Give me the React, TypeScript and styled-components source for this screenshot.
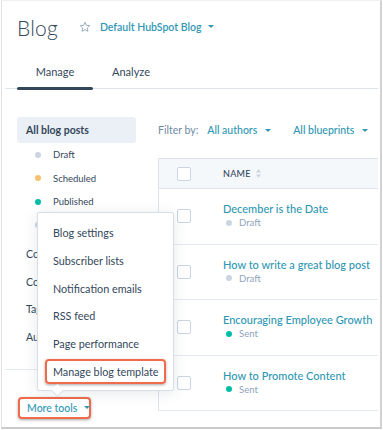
import React from "react";
import styled, { createGlobalStyle } from "styled-components";

const Global = createGlobalStyle`
  html, body { margin: 0; padding: 0; background: #fff; }
  body { font-family: Lato, "Open Sans", "Liberation Sans", sans-serif; color: #33475b; }
  * { box-sizing: border-box; }
`;

const TEAL = "#2f97b3";
const DARK = "#33475b";
const ORANGE = "#ef6b4b";

const Frame = styled.div`
  position: relative;
  margin-left: 1px;
  width: 381px;
  height: 429px;
  border-top: 1px solid #f0f0f0;
  border-left: 1px solid #e2e2e2;
  border-right: 2px solid #d2d2d2;
  border-bottom: 2px solid #cacaca;
  overflow: hidden;
  background: #fff;
`;

const TitleRow = styled.div`
  height: 54px;
  display: flex;
  align-items: center;
  padding-left: 15px;
  padding-bottom: 2px;
`;

const Title = styled.h1`
  margin: 0;
  font-size: 21px;
  font-weight: 300;
  color: ${DARK};
  letter-spacing: 0.2px;
`;

const StarWrap = styled.span`
  display: inline-flex;
  margin-left: 21px;
  margin-right: 9px;
`;

const BlogSelect = styled.span`
  display: inline-flex;
  align-items: center;
  gap: 7px;
  font-size: 10.5px;
  font-weight: 600;
  color: ${TEAL};
  margin-top: -1px;
  white-space: nowrap;
`;

const Caret = styled.span<{ $color?: string }>`
  display: inline-block;
  flex: none;
  width: 0;
  height: 0;
  border-left: 3px solid transparent;
  border-right: 3px solid transparent;
  border-top: 3.5px solid ${(p) => p.$color || TEAL};
`;

const Tabs = styled.div`
  display: flex;
  height: 34px;
  margin: 0 2px 0 3px;
  padding-left: 12px;
  border-bottom: 1px solid #dfe3eb;
`;

const Tab = styled.div<{ $active?: boolean }>`
  position: relative;
  width: 76px;
  display: flex;
  align-items: center;
  justify-content: center;
  font-size: 11px;
  color: ${DARK};
  font-weight: 400;
  padding-bottom: 1px;
  &::after {
    content: "";
    display: ${(p) => (p.$active ? "block" : "none")};
    position: absolute;
    left: 0;
    right: 0;
    bottom: -2px;
    height: 3px;
    border-radius: 2px;
    background: ${DARK};
  }
`;

const Body = styled.div`
  display: flex;
`;

const Sidebar = styled.div`
  width: 156px;
  flex: none;
  padding: 28px 0 0 15px;
`;

const AllPosts = styled.div`
  width: 119px;
  height: 26px;
  border-radius: 3px;
  background: #eaf0f6;
  display: flex;
  align-items: center;
  padding-left: 9px;
  font-size: 10.5px;
  font-weight: 700;
  color: ${DARK};
`;

const StatusItem = styled.div`
  height: 23.5px;
  display: flex;
  align-items: center;
  padding-left: 18px;
  font-size: 9.5px;
  color: ${DARK};
`;

const Dot = styled.span<{ $color: string }>`
  width: 6px;
  height: 6px;
  border-radius: 50%;
  background: ${(p) => p.$color};
  margin-right: 12px;
  flex: none;
`;

const NavList = styled.div`
  margin-top: 3px;
`;

const NavItem = styled.div`
  height: 27.7px;
  display: flex;
  align-items: center;
  padding-left: 9px;
  font-size: 10.5px;
  color: ${DARK};
`;

const Separator = styled.div`
  margin: 18px 0 0 -12px;
  width: 148px;
  height: 1px;
  background: #e5eaf0;
`;

const MoreWrap = styled.div`
  position: relative;
  margin: 27px 0 0 1px;
  width: 73px;
`;

const MoreButton = styled.div`
  height: 22px;
  display: flex;
  align-items: center;
  gap: 7px;
  padding-left: 7px;
  border: 2px solid ${ORANGE};
  border-radius: 4px;
  box-shadow: 0 1px 3px rgba(0, 0, 0, 0.35);
  font-size: 10.5px;
  font-weight: 500;
  color: ${TEAL};
  background: #fff;
  white-space: nowrap;
`;

const Menu = styled.div`
  position: absolute;
  left: 19px;
  bottom: calc(100% + 6px);
  width: 137px;
  padding: 7px 0 6px;
  background: #fff;
  border: 1px solid #d6dee8;
  border-radius: 2px;
  box-shadow: 0 2px 14px rgba(45, 62, 80, 0.12);
  z-index: 5;
  display: flex;
  flex-direction: column;
  gap: 2.7px;
  &::after {
    content: "";
    position: absolute;
    left: 15px;
    bottom: -5px;
    width: 8px;
    height: 8px;
    background: #fff;
    border-right: 1px solid #d6dee8;
    border-bottom: 1px solid #d6dee8;
    transform: rotate(45deg);
  }
`;

const MenuItem = styled.div<{ $highlight?: boolean }>`
  height: 25px;
  margin: 0 7px;
  padding-left: 6px;
  display: flex;
  align-items: center;
  font-size: 10.8px;
  color: ${DARK};
  white-space: nowrap;
  border-radius: 4px;
  border: 2px solid ${(p) => (p.$highlight ? ORANGE : "transparent")};
  box-shadow: ${(p) => (p.$highlight ? "0 1px 3px rgba(0,0,0,0.35)" : "none")};
`;

const Main = styled.div`
  flex: 1;
  min-width: 0;
  padding-top: 27px;
  margin-right: 2px;
`;

const FilterRow = styled.div`
  height: 28px;
  display: flex;
  align-items: center;
  font-size: 10.5px;
  margin-bottom: 14px;
  white-space: nowrap;
`;

const FilterLabel = styled.span`
  color: #6f8aa6;
  margin-right: 9px;
`;

const FilterSelect = styled.span<{ $gap?: number }>`
  display: inline-flex;
  align-items: center;
  gap: 8px;
  color: ${TEAL};
  font-weight: 500;
  margin-right: ${(p) => p.$gap || 0}px;
`;

const Table = styled.div`
  border-left: 1px solid #dfe3eb;
`;

const HeaderRow = styled.div`
  height: 31px;
  display: flex;
  align-items: center;
  background: #f5f8fa;
  border-top: 1px solid #dfe3eb;
  border-bottom: 1px solid #dfe3eb;
`;

const CheckCell = styled.div`
  width: 64px;
  flex: none;
  padding-left: 18px;
  display: flex;
  align-items: center;
`;

const Checkbox = styled.span`
  width: 14px;
  height: 14px;
  border: 1px solid #cbd6e2;
  border-radius: 2px;
  background: #fff;
`;

const HeadLabel = styled.span`
  display: inline-flex;
  align-items: center;
  gap: 5px;
  font-size: 9px;
  font-weight: 500;
  letter-spacing: 0.3px;
  color: ${DARK};
`;

const Row = styled.div`
  height: 55.5px;
  display: flex;
  align-items: center;
  border-bottom: 1px solid #e5eaf0;
`;

const NameCell = styled.div`
  display: flex;
  flex-direction: column;
  gap: 2px;
  margin-top: -2px;
`;

const PostTitle = styled.span`
  font-size: 11px;
  font-weight: 500;
  color: ${TEAL};
  white-space: nowrap;
`;

const PostStatus = styled.span`
  display: flex;
  align-items: center;
  font-size: 9.5px;
  color: #8fa4ba;
  padding-left: 3px;
  & > span:first-child {
    margin-right: 7px;
  }
`;

const Star = () => (
  <svg width="12" height="12" viewBox="0 0 24 24" fill="none" stroke="#8fa4ba" strokeWidth="1.8" strokeLinejoin="round">
    <path d="M12 2.5l2.9 6.1 6.6.8-4.9 4.6 1.3 6.6L12 17.3l-5.9 3.3 1.3-6.6-4.9-4.6 6.6-.8z" />
  </svg>
);

const SortIcon = () => (
  <svg width="5" height="9" viewBox="0 0 5 9">
    <path d="M2.5 0L5 3.5H0z" fill="#cbd6e2" />
    <path d="M2.5 9L5 5.5H0z" fill="#cbd6e2" />
  </svg>
);

const statuses = [
  { label: "Draft", color: "#cbd6e2" },
  { label: "Scheduled", color: "#f5c26b" },
  { label: "Published", color: "#00bda5" },
  { label: "Archived", color: "#cbd6e2" },
];

const navItems = ["Comments", "Contacts", "Tags", "Authors"];

const menuItems = [
  "Blog settings",
  "Subscriber lists",
  "Notification emails",
  "RSS feed",
  "Page performance",
  "Manage blog template",
];

const posts = [
  { title: "December is the Date", status: "Draft", color: "#cbd6e2" },
  { title: "How to write a great blog post", status: "Draft", color: "#cbd6e2" },
  { title: "Encouraging Employee Growth", status: "Sent", color: "#00bda5" },
  { title: "How to Promote Content", status: "Sent", color: "#00bda5" },
];

export default function App() {
  return (
    <>
      <Global />
      <Frame>
        <TitleRow>
          <Title>Blog</Title>
          <StarWrap>
            <Star />
          </StarWrap>
          <BlogSelect>
            Default HubSpot Blog <Caret />
          </BlogSelect>
        </TitleRow>
        <Tabs>
          <Tab $active>Manage</Tab>
          <Tab>Analyze</Tab>
        </Tabs>
        <Body>
          <Sidebar>
            <AllPosts>All blog posts</AllPosts>
            {statuses.map((s) => (
              <StatusItem key={s.label}>
                <Dot $color={s.color} />
                {s.label}
              </StatusItem>
            ))}
            <NavList>
              {navItems.map((n) => (
                <NavItem key={n}>{n}</NavItem>
              ))}
            </NavList>
            <Separator />
            <MoreWrap>
              <Menu>
                {menuItems.map((m) => (
                  <MenuItem key={m} $highlight={m === "Manage blog template"}>
                    {m}
                  </MenuItem>
                ))}
              </Menu>
              <MoreButton>
                More tools <Caret />
              </MoreButton>
            </MoreWrap>
          </Sidebar>
          <Main>
            <FilterRow>
              <FilterLabel>Filter by:</FilterLabel>
              <FilterSelect $gap={22}>
                All authors <Caret />
              </FilterSelect>
              <FilterSelect>
                All blueprints <Caret />
              </FilterSelect>
            </FilterRow>
            <Table>
              <HeaderRow>
                <CheckCell>
                  <Checkbox />
                </CheckCell>
                <HeadLabel>
                  NAME <SortIcon />
                </HeadLabel>
              </HeaderRow>
              {posts.map((p) => (
                <Row key={p.title}>
                  <CheckCell>
                    <Checkbox />
                  </CheckCell>
                  <NameCell>
                    <PostTitle>{p.title}</PostTitle>
                    <PostStatus>
                      <Dot $color={p.color} />
                      {p.status}
                    </PostStatus>
                  </NameCell>
                </Row>
              ))}
            </Table>
          </Main>
        </Body>
      </Frame>
    </>
  );
}
